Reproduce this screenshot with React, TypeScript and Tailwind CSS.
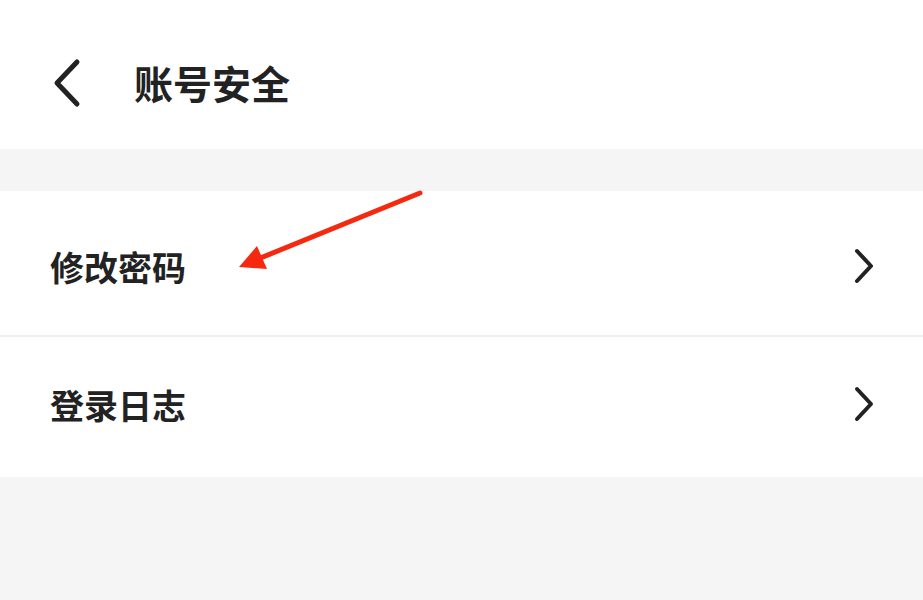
import React from "react";

const font = { fontFamily: '"Noto Sans CJK SC", "Noto Sans", sans-serif' };

const ChevronRight = () => (
  <svg width="28" height="40" viewBox="0 0 28 40" className="shrink-0">
    <polyline points="6,4 20,19 6,34" fill="none" stroke="#222" strokeWidth="4" strokeLinecap="round" strokeLinejoin="round" />
  </svg>
);

const rows = [
  { label: "修改密码", cls: "h-[144px] pt-[8px]" },
  { label: "登录日志", cls: "h-[140px] pb-[4px]" },
];

export default function App() {
  return (
    <div className="relative w-[923px] h-[600px] bg-[#f5f5f5] overflow-hidden text-[#222]" style={font}>
      {/* Header */}
      <div className="h-[149px] bg-white flex items-center pt-[16px] pl-[48px]">
        <svg width="40" height="50" viewBox="0 0 40 50" className="shrink-0">
          <polyline points="29,4 9,25 29,46" fill="none" stroke="#222" strokeWidth="5" strokeLinecap="round" strokeLinejoin="round" />
        </svg>
        <h1 className="ml-[46px] text-[39px] font-semibold leading-none">账号安全</h1>
      </div>

      <div className="h-[42px]" />

      {/* List */}
      <div className="bg-white">
        {rows.map((row, i) => (
          <React.Fragment key={row.label}>
            {i > 0 && <div className="h-[2px] bg-[#efefef]" />}
            <div className={`flex items-center justify-between pl-[50px] pr-[44px] ${row.cls}`}>
              <span className="text-[34px] font-semibold leading-none">{row.label}</span>
              <ChevronRight />
            </div>
          </React.Fragment>
        ))}
      </div>

      {/* Annotation arrow */}
      <svg className="absolute inset-0 pointer-events-none" width="923" height="600" viewBox="0 0 923 600">
        <line x1="420" y1="193" x2="258" y2="259" stroke="#f5290f" strokeWidth="5" strokeLinecap="round" />
        <polygon points="239,267 257,246 267,269" fill="#f5290f" />
      </svg>
    </div>
  );
}
